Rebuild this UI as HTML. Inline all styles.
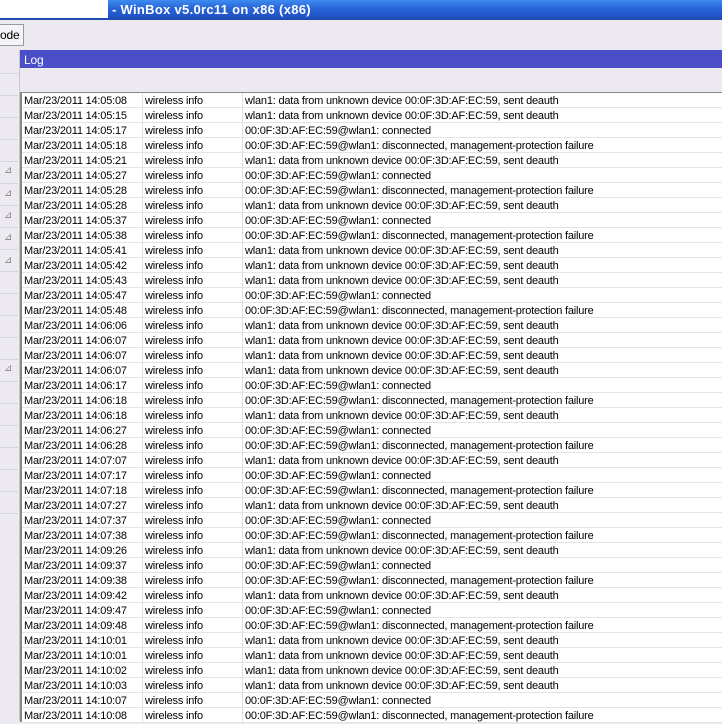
<!DOCTYPE html>
<html><head><style>
*{margin:0;padding:0;box-sizing:border-box}
body{width:722px;height:721px;overflow:hidden;background:#ece9f0;font-family:"Liberation Sans",sans-serif;font-size:11px;letter-spacing:-0.2px;position:relative}
#title{position:absolute;left:0;top:0;width:722px;height:20px;background:linear-gradient(#3d8cf0,#2a66d8 40%,#1f55c8 80%,#2048a8);color:#fff;font-weight:bold;font-size:13px;line-height:20px;letter-spacing:0.3px}
#title span{position:absolute;left:112px;top:0}
#wbox{position:absolute;left:0;top:0;width:108px;height:18px;background:#fff}
#tb{position:absolute;left:0;top:20px;width:722px;height:30px;background:#ece9f0}
#btn{position:absolute;left:-4px;top:24px;width:28px;height:22px;border:1px solid #9a9aa0;background:#f4f3f6;font-size:12px;line-height:20px;padding-left:3px}
#left{position:absolute;left:0;top:50px;width:20px;height:671px;background:#ece9f0;border-right:1px solid #c8c8cc}
#left i{position:absolute;left:0;width:18px;height:1px;background:#d4d4d8}
#left b{position:absolute;left:4px;font-weight:normal;color:#888;font-size:10px}
#hdr{position:absolute;left:20px;top:50px;width:702px;height:18px;background:#4a4ec8;color:#fff;font-size:12px;line-height:20px;padding-left:4px}
#gray{position:absolute;left:20px;top:68px;width:702px;height:24px;background:#ece9f0}
#list{position:absolute;left:20px;top:92px;width:702px;height:630px;background:#fff;border-top:1px solid #888;border-left:2px solid #888}
.r{height:15px;border-bottom:1px solid #e4e4e8;position:relative;line-height:16px;white-space:nowrap}
.r span{position:absolute;top:0}
.a{left:2px}.b{left:120px;border-left:1px solid #e0e0e4;padding-left:2px;height:15px}.c{left:220px;border-left:1px solid #e0e0e4;padding-left:2px;height:15px}
</style></head><body>
<div id="title"><span>- WinBox v5.0rc11 on x86 (x86)</span></div>
<div id="wbox"></div>
<div id="tb"></div>
<div id="btn">ode</div>
<div id="left">
<i style="top:23px"></i><i style="top:45px"></i><i style="top:67px"></i><i style="top:89px"></i><i style="top:111px"></i><i style="top:133px"></i><i style="top:155px"></i><i style="top:177px"></i><i style="top:199px"></i><i style="top:221px"></i><i style="top:243px"></i><i style="top:265px"></i><i style="top:287px"></i><i style="top:309px"></i><i style="top:331px"></i><i style="top:353px"></i><i style="top:375px"></i><i style="top:397px"></i><i style="top:419px"></i><i style="top:441px"></i><i style="top:463px"></i>
<b style="top:115px">&#8895;</b><b style="top:138px">&#8895;</b><b style="top:160px">&#8895;</b><b style="top:182px">&#8895;</b><b style="top:205px">&#8895;</b><b style="top:313px">&#8895;</b>
</div>
<div id="hdr">Log</div>
<div id="gray"></div>
<div id="list">
<div class="r"><span class="a">Mar/23/2011 14:05:08</span><span class="b">wireless info</span><span class="c">wlan1: data from unknown device 00:0F:3D:AF:EC:59, sent deauth</span></div>
<div class="r"><span class="a">Mar/23/2011 14:05:15</span><span class="b">wireless info</span><span class="c">wlan1: data from unknown device 00:0F:3D:AF:EC:59, sent deauth</span></div>
<div class="r"><span class="a">Mar/23/2011 14:05:17</span><span class="b">wireless info</span><span class="c">00:0F:3D:AF:EC:59@wlan1: connected</span></div>
<div class="r"><span class="a">Mar/23/2011 14:05:18</span><span class="b">wireless info</span><span class="c">00:0F:3D:AF:EC:59@wlan1: disconnected, management-protection failure</span></div>
<div class="r"><span class="a">Mar/23/2011 14:05:21</span><span class="b">wireless info</span><span class="c">wlan1: data from unknown device 00:0F:3D:AF:EC:59, sent deauth</span></div>
<div class="r"><span class="a">Mar/23/2011 14:05:27</span><span class="b">wireless info</span><span class="c">00:0F:3D:AF:EC:59@wlan1: connected</span></div>
<div class="r"><span class="a">Mar/23/2011 14:05:28</span><span class="b">wireless info</span><span class="c">00:0F:3D:AF:EC:59@wlan1: disconnected, management-protection failure</span></div>
<div class="r"><span class="a">Mar/23/2011 14:05:28</span><span class="b">wireless info</span><span class="c">wlan1: data from unknown device 00:0F:3D:AF:EC:59, sent deauth</span></div>
<div class="r"><span class="a">Mar/23/2011 14:05:37</span><span class="b">wireless info</span><span class="c">00:0F:3D:AF:EC:59@wlan1: connected</span></div>
<div class="r"><span class="a">Mar/23/2011 14:05:38</span><span class="b">wireless info</span><span class="c">00:0F:3D:AF:EC:59@wlan1: disconnected, management-protection failure</span></div>
<div class="r"><span class="a">Mar/23/2011 14:05:41</span><span class="b">wireless info</span><span class="c">wlan1: data from unknown device 00:0F:3D:AF:EC:59, sent deauth</span></div>
<div class="r"><span class="a">Mar/23/2011 14:05:42</span><span class="b">wireless info</span><span class="c">wlan1: data from unknown device 00:0F:3D:AF:EC:59, sent deauth</span></div>
<div class="r"><span class="a">Mar/23/2011 14:05:43</span><span class="b">wireless info</span><span class="c">wlan1: data from unknown device 00:0F:3D:AF:EC:59, sent deauth</span></div>
<div class="r"><span class="a">Mar/23/2011 14:05:47</span><span class="b">wireless info</span><span class="c">00:0F:3D:AF:EC:59@wlan1: connected</span></div>
<div class="r"><span class="a">Mar/23/2011 14:05:48</span><span class="b">wireless info</span><span class="c">00:0F:3D:AF:EC:59@wlan1: disconnected, management-protection failure</span></div>
<div class="r"><span class="a">Mar/23/2011 14:06:06</span><span class="b">wireless info</span><span class="c">wlan1: data from unknown device 00:0F:3D:AF:EC:59, sent deauth</span></div>
<div class="r"><span class="a">Mar/23/2011 14:06:07</span><span class="b">wireless info</span><span class="c">wlan1: data from unknown device 00:0F:3D:AF:EC:59, sent deauth</span></div>
<div class="r"><span class="a">Mar/23/2011 14:06:07</span><span class="b">wireless info</span><span class="c">wlan1: data from unknown device 00:0F:3D:AF:EC:59, sent deauth</span></div>
<div class="r"><span class="a">Mar/23/2011 14:06:07</span><span class="b">wireless info</span><span class="c">wlan1: data from unknown device 00:0F:3D:AF:EC:59, sent deauth</span></div>
<div class="r"><span class="a">Mar/23/2011 14:06:17</span><span class="b">wireless info</span><span class="c">00:0F:3D:AF:EC:59@wlan1: connected</span></div>
<div class="r"><span class="a">Mar/23/2011 14:06:18</span><span class="b">wireless info</span><span class="c">00:0F:3D:AF:EC:59@wlan1: disconnected, management-protection failure</span></div>
<div class="r"><span class="a">Mar/23/2011 14:06:18</span><span class="b">wireless info</span><span class="c">wlan1: data from unknown device 00:0F:3D:AF:EC:59, sent deauth</span></div>
<div class="r"><span class="a">Mar/23/2011 14:06:27</span><span class="b">wireless info</span><span class="c">00:0F:3D:AF:EC:59@wlan1: connected</span></div>
<div class="r"><span class="a">Mar/23/2011 14:06:28</span><span class="b">wireless info</span><span class="c">00:0F:3D:AF:EC:59@wlan1: disconnected, management-protection failure</span></div>
<div class="r"><span class="a">Mar/23/2011 14:07:07</span><span class="b">wireless info</span><span class="c">wlan1: data from unknown device 00:0F:3D:AF:EC:59, sent deauth</span></div>
<div class="r"><span class="a">Mar/23/2011 14:07:17</span><span class="b">wireless info</span><span class="c">00:0F:3D:AF:EC:59@wlan1: connected</span></div>
<div class="r"><span class="a">Mar/23/2011 14:07:18</span><span class="b">wireless info</span><span class="c">00:0F:3D:AF:EC:59@wlan1: disconnected, management-protection failure</span></div>
<div class="r"><span class="a">Mar/23/2011 14:07:27</span><span class="b">wireless info</span><span class="c">wlan1: data from unknown device 00:0F:3D:AF:EC:59, sent deauth</span></div>
<div class="r"><span class="a">Mar/23/2011 14:07:37</span><span class="b">wireless info</span><span class="c">00:0F:3D:AF:EC:59@wlan1: connected</span></div>
<div class="r"><span class="a">Mar/23/2011 14:07:38</span><span class="b">wireless info</span><span class="c">00:0F:3D:AF:EC:59@wlan1: disconnected, management-protection failure</span></div>
<div class="r"><span class="a">Mar/23/2011 14:09:26</span><span class="b">wireless info</span><span class="c">wlan1: data from unknown device 00:0F:3D:AF:EC:59, sent deauth</span></div>
<div class="r"><span class="a">Mar/23/2011 14:09:37</span><span class="b">wireless info</span><span class="c">00:0F:3D:AF:EC:59@wlan1: connected</span></div>
<div class="r"><span class="a">Mar/23/2011 14:09:38</span><span class="b">wireless info</span><span class="c">00:0F:3D:AF:EC:59@wlan1: disconnected, management-protection failure</span></div>
<div class="r"><span class="a">Mar/23/2011 14:09:42</span><span class="b">wireless info</span><span class="c">wlan1: data from unknown device 00:0F:3D:AF:EC:59, sent deauth</span></div>
<div class="r"><span class="a">Mar/23/2011 14:09:47</span><span class="b">wireless info</span><span class="c">00:0F:3D:AF:EC:59@wlan1: connected</span></div>
<div class="r"><span class="a">Mar/23/2011 14:09:48</span><span class="b">wireless info</span><span class="c">00:0F:3D:AF:EC:59@wlan1: disconnected, management-protection failure</span></div>
<div class="r"><span class="a">Mar/23/2011 14:10:01</span><span class="b">wireless info</span><span class="c">wlan1: data from unknown device 00:0F:3D:AF:EC:59, sent deauth</span></div>
<div class="r"><span class="a">Mar/23/2011 14:10:01</span><span class="b">wireless info</span><span class="c">wlan1: data from unknown device 00:0F:3D:AF:EC:59, sent deauth</span></div>
<div class="r"><span class="a">Mar/23/2011 14:10:02</span><span class="b">wireless info</span><span class="c">wlan1: data from unknown device 00:0F:3D:AF:EC:59, sent deauth</span></div>
<div class="r"><span class="a">Mar/23/2011 14:10:03</span><span class="b">wireless info</span><span class="c">wlan1: data from unknown device 00:0F:3D:AF:EC:59, sent deauth</span></div>
<div class="r"><span class="a">Mar/23/2011 14:10:07</span><span class="b">wireless info</span><span class="c">00:0F:3D:AF:EC:59@wlan1: connected</span></div>
<div class="r"><span class="a">Mar/23/2011 14:10:08</span><span class="b">wireless info</span><span class="c">00:0F:3D:AF:EC:59@wlan1: disconnected, management-protection failure</span></div>
</div>
</body></html>
